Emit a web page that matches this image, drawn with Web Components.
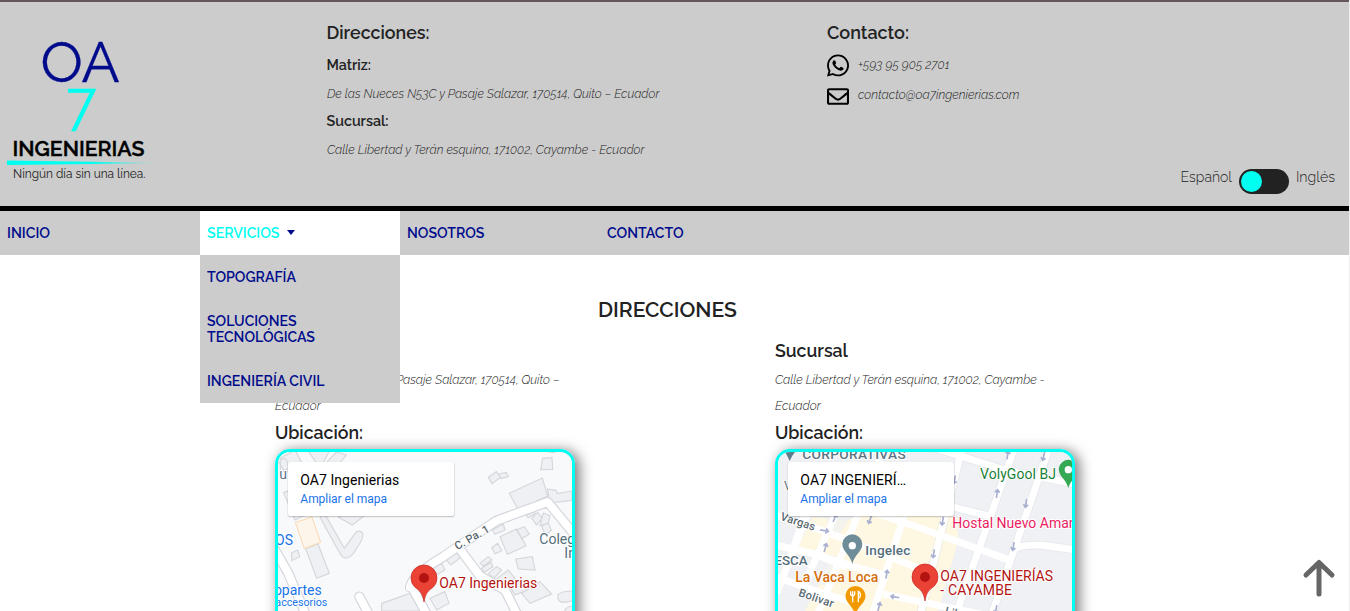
<!DOCTYPE html>
<html lang="es">
<head>
<meta charset="utf-8">
<title>OA7 Ingenierias</title>
<style>
html,body{margin:0;height:611px;overflow:hidden;background:#fff}
body{font-family:Raleway,Lato,sans-serif;color:#222}
</style>
</head>
<body>
<oa-page></oa-page>
<script>
const define = (name, html, setup) => {
  const t = document.createElement('template');
  t.innerHTML = html;
  customElements.define(name, class extends HTMLElement {
    connectedCallback() {
      if (this.shadowRoot) return;
      this.attachShadow({mode: 'open'}).append(t.content.cloneNode(true));
      if (setup) setup(this, this.shadowRoot);
    }
  });
};

// One line of text, scaled so that it takes the width given in w.
define('fit-text', `<style>:host{display:block;white-space:nowrap}span{display:inline-block;white-space:nowrap;vertical-align:top}</style><span><slot></slot></span>`,
  (el, root) => {
    const s = root.querySelector('span'), w = +el.getAttribute('w');
    const size = parseFloat(getComputedStyle(s).fontSize);
    const k = w / s.getBoundingClientRect().width;
    if (k > .9 && k < 1.1) s.style.fontSize = (size * k).toFixed(2) + 'px';
  });

define('oa-logo', `<style>:host{display:block;width:160px;height:150px}svg{display:block}</style>
<svg width="160" height="150" viewBox="0 36 160 150" font-family="Raleway,Lato,sans-serif">
<defs><linearGradient id="g"><stop offset=".55" stop-color="#00fff0"/><stop offset="1" stop-color="#00fff0" stop-opacity="0"/></linearGradient></defs>
<text x="40.500" y="82.400" font-size="57" font-weight="400" fill="#000b8c" stroke="#000b8c" stroke-width=".3" textLength="79" lengthAdjust="spacingAndGlyphs">OA</text>
<text x="66.500" y="130.700" font-size="57.500" font-weight="400" fill="#00fff0" stroke="#00fff0" stroke-width=".3" textLength="29.500" lengthAdjust="spacingAndGlyphs" style="font-feature-settings:'lnum'">7</text>
<text x="12.500" y="156" font-size="20.500" font-weight="600" fill="#000" stroke="#000" stroke-width=".4" textLength="132" lengthAdjust="spacingAndGlyphs">INGENIERIAS</text>
<path d="M7 160.500L158 162.700V163.300L7 165Z" fill="url(#g)"/>
<text x="13" y="178" font-size="12.500" fill="#222" textLength="132.500" lengthAdjust="spacingAndGlyphs">Ningún día sin una línea.</text>
</svg>`);

define('oa-switch', `<style>:host{display:block;box-sizing:border-box;width:50px;height:25px;border-radius:13px;background:#222;padding:2px}
i{display:block;width:21px;height:21px;border-radius:50%;background:#00fff0}</style><i></i>`);

define('oa-header', `<style>
:host{display:block;box-sizing:border-box;height:211px;background:#ccc;border-top:2px solid #66555b;border-bottom:5px solid #000}
.row{display:grid;grid-template-columns:326.500px 500.500px 1fr;height:204px}
.logo{padding-top:34px}.col{padding-top:17px}
.h{font-size:18px;font-weight:650;line-height:28px;margin-bottom:5px}
.b{font-size:14.400px;font-weight:650;line-height:26px}
.i{font-size:12.800px;font-weight:300;font-style:italic;line-height:32px;height:30px;padding-left:.5px}
.c{display:flex;align-items:center;gap:9px;height:30px}
.c svg{width:22px;height:23px;flex:none;margin-top:1px}
.c .i{line-height:30px;margin-top:-1px;padding:0}
.right{display:flex;flex-direction:column}
.lang{display:flex;align-items:center;margin:auto 14px 10px auto;gap:7px;font-size:14.400px;font-weight:300;height:29px}
.lang fit-text{line-height:20px;margin-top:-9px}
</style>
<div class="row"><div class="logo"><oa-logo></oa-logo></div>
<div class="col"><fit-text class="h" w="103">Direcciones:</fit-text>
<fit-text class="b" w="44.5">Matriz:</fit-text><fit-text class="i" w="332.5">De las Nueces N53C y Pasaje Salazar, 170514, Quito – Ecuador</fit-text>
<fit-text class="b" w="62">Sucursal:</fit-text><fit-text class="i" w="317.5">Calle Libertad y Terán esquina, 171002, Cayambe - Ecuador</fit-text></div>
<div class="col right"><fit-text class="h" w="82" style="margin-bottom:3px">Contacto:</fit-text>
<div class="c"><svg viewBox="0 32 448 448"><path d="M380.900 97.100C339 55.100 283.200 32 223.900 32c-122.400 0-222 99.600-222 222 0 39.100 10.200 77.300 29.600 111L0 480l117.700-30.900c32.400 17.700 68.900 27 106.100 27h.1c122.300 0 224.100-99.600 224.100-222 0-59.300-25.200-115-67.100-157zm-157 341.600c-33.200 0-65.700-8.900-94-25.700l-6.700-4-69.800 18.300L72 359.200l-4.400-7c-18.500-29.400-28.200-63.300-28.200-98.200 0-101.700 82.800-184.500 184.600-184.500 49.300 0 95.600 19.200 130.400 54.100 34.800 34.900 56.200 81.200 56.100 130.500 0 101.800-84.900 184.600-186.600 184.600zm101.200-138.200c-5.500-2.800-32.800-16.200-37.900-18-5.100-1.900-8.800-2.800-12.500 2.800-3.700 5.600-14.300 18-17.600 21.800-3.200 3.700-6.500 4.200-12 1.400-32.600-16.300-54-29.100-75.500-66-5.700-9.800 5.700-9.100 16.300-30.300 1.800-3.700.9-6.900-.5-9.700-1.400-2.800-12.500-30.100-17.100-41.200-4.500-10.800-9.100-9.300-12.500-9.500-3.200-.2-6.900-.2-10.600-.2-3.700 0-9.700 1.400-14.800 6.900-5.100 5.600-19.400 19-19.400 46.300 0 27.300 19.900 53.700 22.600 57.400 2.800 3.700 39.100 59.700 94.800 83.800 35.200 15.200 49 16.500 66.600 13.900 10.700-1.600 32.800-13.400 37.400-26.400 4.600-13 4.600-24.100 3.200-26.400-1.300-2.500-5-3.900-10.500-6.600z"/></svg><fit-text class="i" w="91.5">+593 95 905 2701</fit-text></div>
<div class="c"><svg viewBox="0 0 512 512" style="margin-top:3px"><path d="M464 64H48C21.500 64 0 85.500 0 112v288c0 26.500 21.500 48 48 48h416c26.500 0 48-21.500 48-48V112c0-26.500-21.500-48-48-48zm0 48v40.800c-22.400 18.300-58.200 46.700-134.600 106.500-16.800 13.200-50.200 45.100-73.400 44.700-23.200.4-56.600-31.500-73.400-44.700C106.200 199.500 70.400 171.100 48 152.800V112h416zM48 400V214.400c22.900 18.200 55.400 43.900 104.900 82.600 21.900 17.200 60.100 55.200 103.100 55 42.700.2 80.500-37.200 103.100-54.900 49.500-38.800 82-64.400 104.900-82.700V400H48z"/></svg><fit-text class="i" w="161.5">contacto@oa7ingenierias.com</fit-text></div>
<div class="lang"><fit-text w="51.5">Español</fit-text><oa-switch></oa-switch><fit-text w="39">Inglés</fit-text></div></div></div>`);

define('oa-nav', `<style>
:host{display:flex;height:44px;background:#ccc;color:#000b8c;font-size:14.400px;font-weight:600;line-height:16px;position:relative;z-index:2}
.it{box-sizing:border-box;width:200px;padding:14px 7px}
.open{background:#fff;position:relative}.top{display:flex;align-items:center;gap:7px}.top fit-text{color:#00fff0}
.top i{border:4.500px solid transparent;border-top:5px solid #000b8c;border-bottom:0;margin-top:-1px}
.menu{position:absolute;left:0;top:44px;width:200px;background:#ccc}
</style><div class="it"><fit-text w="43">INICIO</fit-text></div>
<div class="it open"><div class="top"><fit-text w="72.5">SERVICIOS</fit-text><i></i></div>
<div class="menu"><div class="it"><fit-text w="89">TOPOGRAFÍA</fit-text></div><div class="it"><fit-text w="89.5">SOLUCIONES</fit-text><fit-text w="108">TECNOLÓGICAS</fit-text></div><div class="it"><fit-text w="117.5">INGENIERÍA CIVIL</fit-text></div></div></div>
<div class="it"><fit-text w="77.5">NOSOTROS</fit-text></div><div class="it"><fit-text w="76.5">CONTACTO</fit-text></div>`);

const frame = `:host{display:block;box-sizing:border-box;width:300px;height:300px;border:3px solid #00fff0;border-radius:15px;overflow:hidden;box-shadow:4px 2px 14px rgba(0,0,0,.55)}
svg{display:block}svg text{font-family:Roboto,sans-serif;font-size:42px}
.halo{paint-order:stroke;stroke:#fff;stroke-width:6px;stroke-linejoin:round}.m{font-weight:500}`;
const card = (t, w) => `<rect x="69" y="68" width="499" height="163" rx="6" fill="#000" opacity=".13"/><rect x="66" y="65" width="504" height="168" rx="8" fill="#000" opacity=".06"/><rect x="69" y="66" width="498" height="162" rx="6" fill="#fff"/>
<text x="106" y="135" fill="#000" textLength="${w}">${t}</text><text x="106" y="189" fill="#1a73e8" textLength="260" style="font-size:36px">Ampliar el mapa</text>`;
const pin = (x, y) => `<path transform="translate(${x} ${y})" d="M0 0C-4 -26 -13 -34 -27 -44A39 39 0 1 1 27 -44C13 -34 4 -26 0 0Z" fill="#ea4335" stroke="#c5221f" stroke-width="2"/><circle cx="${x}" cy="${y-72}" r="15" fill="#b31412"/>`;

define('map-matriz', `<style>${frame}.b path{fill:#eff0f3;stroke:#d5d7db;stroke-width:3.500}.r path{fill:none;stroke-linejoin:round;stroke-linecap:round}.o path{stroke:#d3d6dc;stroke-width:31}.n path{stroke:#fff;stroke-width:24}</style>
<svg width="294" height="294" viewBox="39 36 882 882"><rect x="39" y="36" width="882" height="882" fill="#f8f9fb"/>
<g class="b">
<path d="M90 30L125 95H60L36 60ZM128 30L165 85L195 30ZM215 36L244 45L205 92L180 72ZM46 60Q68 45 70 85L46 100ZM56 158L90 145L140 215L90 240Z"/>
<path d="M670 112L694 95L707 112L681 131ZM702 102L724 97L730 110L708 116ZM833 55L861 52L863 88L827 89ZM850 36L868 34V38Z"/>
<path d="M733 160L832 114L848 168L768 205L758 206ZM848 147L873 151L877 161L921 153V181L862 188L852 178Z"/>
<path d="M220 232L245 218H310L262 255ZM122 326L159 312L193 400L155 415ZM80 338L98 330L104 350L80 362Z"/>
<path d="M165 232Q178 215 190 240L238 325L270 280Q282 267 293 280Q300 290 265 340Q240 370 222 335Z"/>
<path d="M705 290L755 267L783 317L727 343ZM680 323L698 310L710 332L690 341ZM755 270L778 260L793 282L770 296ZM682 270L715 252L720 270L690 283ZM784 225L808 214L810 222L789 233ZM800 235L818 217L832 235L815 255ZM835 219L855 227L850 250L825 257ZM830 257L850 248L859 270L841 286Z"/>
<path d="M544 360L573 336L586 353L558 375ZM752 357L802 350L810 390L760 387ZM645 370L669 350L681 360L655 378ZM650 385L678 367L684 380L657 397ZM670 400L695 380L710 390L686 415ZM690 420L730 390L750 415L710 440ZM735 440L775 420L787 450L750 465ZM770 460L825 425L860 462L795 490Z"/>
<path d="M350 490L440 458L474 513H350ZM495 475L540 455L552 490L515 510ZM495 390L530 370L540 390L510 407ZM880 463Q900 450 935 454V478Q900 490 885 485Q875 475 880 463ZM900 510Q910 495 935 500V530H900Z"/>
</g>
<path d="M91 247L141 231L167 307L118 326Z" fill="#fef5ea" stroke="#fad9b0" stroke-width="3"/>
<g class="r o"><path d="M435 442Q440 405 535 350L605 302L695 242L848 186L932 288M590 335L645 408L720 450L760 530M440 440L495 540M30 330L70 400L125 530M283 470L310 520"/></g>
<g class="r n"><path d="M435 442Q440 405 535 350L605 302L695 242L848 186L932 288M590 335L645 408L720 450L760 530M440 440L495 540M30 330L70 400L125 530M283 470L310 520"/></g>
<text class="halo" x="43" y="117" fill="#5b7484">u</text>
<text class="halo m" transform="translate(577 331) rotate(-30)" fill="#5a6a72" textLength="114" style="font-size:34px">C. Pa. 1</text>
<text class="halo" x="823" y="312" fill="#546e7a">Coleg</text><text class="halo" x="898" y="354" fill="#546e7a">In</text>
<text class="halo" x="84" y="315" text-anchor="end" fill="#1a73e8">OS</text><text class="halo" x="170" y="465" text-anchor="end" fill="#1a73e8">opartes</text><text class="halo" x="187" y="497" text-anchor="end" fill="#1a73e8" style="font-size:32px">accesorios</text>
${pin(477, 486)}<text class="halo" x="523" y="444" fill="#b31412" textLength="294">OA7 Ingenierias</text>
${card('OA7 Ingenierias', 297)}</svg>`);

const arrow = (x, y, a) => `<path transform="translate(${x} ${y}) rotate(${a})" d="M0 13V-11M-7 -4L0 -12L7 -4"/>`;
define('map-sucursal', `<style>${frame}.r path{fill:none;stroke:#fff;stroke-width:21;stroke-linejoin:round}.r .e{stroke:#dfe2e8;stroke-width:26}.a path{fill:none;stroke:#a9afd0;stroke-width:5}</style>
<svg width="294" height="294" viewBox="39 36 882 882"><rect x="39" y="36" width="882" height="882" fill="#f0f1f4"/>
<path d="M142 232L250 240L305 215L575 230L580 300L520 513H120L200 360L95 330Z" fill="#fef7e2"/>
<path d="M190 228L250 240L220 290L180 275ZM110 330L225 350L190 440L70 405ZM360 110L420 36H500L470 200Z" fill="#f0f1f4" opacity=".65"/>
<g class="r"><path class="e" d="M590 30L465 530M746 30L560 560M850 30L668 560M480 15L720 90L935 133M520 190L680 230M742 333Q760 312 830 316L935 330" opacity=".6"/>
<path d="M345 60L155 530M426 200L310 560M590 30L465 530M746 30L560 560M850 30L668 560"/>
<path d="M135 180L70 370M130 215L35 460M215 215L120 430"/>
<path d="M480 15L720 90L935 133M300 210L440 255L738 362M30 225L190 278L450 380L570 430M520 190L680 230M30 315L150 342L245 382M150 342L265 380L360 405M30 410L190 465L290 495M355 462L490 490L660 525"/>
<path d="M742 333Q760 312 830 316L935 330"/></g>
<g class="a">${arrow(728,45,10)}${arrow(836,49,195)}${arrow(696,161,8)}${arrow(783,190,188)}${arrow(569,119,190)}${arrow(533,243,190)}${arrow(506,341,190)}${arrow(745,319,190)}${arrow(315,239,200)}${arrow(209,234,20)}${arrow(178,272,100)}${arrow(181,323,15)}${arrow(365,403,10)}${arrow(390,471,280)}${arrow(342,500,15)}${arrow(693,508,190)}</g>
<path d="M60 36Q68 48 74 63Q80 48 90 36Z" fill="#607d8b"/>
<text class="halo m" x="112" y="57" fill="#5b7484" textLength="310" style="font-size:41px">CORPORATIVAS</text>
<text class="halo" x="57" y="150" fill="#5a6a72" style="font-size:36px">V</text>
<text class="halo" x="645" y="117" fill="#188038" textLength="228">VolyGool BJ</text>
<path d="M910 144C905 125 895 118 886 104A29 29 0 1 1 935 104C926 118 915 125 910 144Z" fill="#34a853"/><circle cx="910" cy="89" r="11" fill="#fff"/>
<text class="halo" x="562" y="264" fill="#e91e63">Hostal Nuevo Amanecer</text>
<text class="halo m" transform="translate(44 239) rotate(18)" fill="#5a6a72" textLength="108" style="font-size:34px">Vargas</text>
<path d="M262 373C258 352 246 344 238 331A30 30 0 1 1 286 331C278 344 266 352 262 373Z" fill="#6f8c99"/><circle cx="262" cy="317" r="11" fill="#fff"/>
<text class="halo m" x="301" y="345" fill="#546e7a" textLength="135" style="font-size:41px">Ingelec</text>
<text class="halo m" x="128" y="375" text-anchor="end" fill="#546e7a" style="font-size:40px">ESCA</text>
<text class="halo m" x="91" y="426" fill="#d56e0c" textLength="249">La Vaca Loca</text>
<text class="halo m" transform="translate(98 467) rotate(19)" fill="#5a6a72" textLength="110" style="font-size:34px">Bolivar</text>
<path d="M271 528C267 505 256 499 247 485A30 30 0 1 1 296 485C287 499 275 505 271 528Z" fill="#f29900"/>
<path d="M257 454V464Q263 472 269 464V454M263 454V487M280 487V454Q290 460 284 473H280" fill="none" stroke="#fff" stroke-width="4"/>
<text class="halo m" transform="translate(538 523) rotate(15)" fill="#5a6a72" style="font-size:34px">Libertad</text>
${pin(480, 483)}<text class="halo" x="526" y="424" fill="#b31412" textLength="338">OA7 INGENIERÍAS</text><text class="halo" x="526" y="465" fill="#b31412" textLength="215">- CAYAMBE</text>
${card('OA7 INGENIERÍ…', 317)}</svg>`);

define('oa-place', `<style>:host{display:block;width:300px}
::slotted(.t){font-size:18px;font-weight:650;line-height:26px}::slotted(.t2){margin-top:1px;margin-bottom:3px}
::slotted(.i){font-size:12.800px;font-weight:300;font-style:italic;line-height:26px}::slotted(.f){margin-top:3px}</style><slot></slot>`);

define('oa-page', `<style>:host{display:block;height:611px;width:1349px;border-right:1px solid #eee;overflow:hidden;position:relative}
main{padding-top:40px}.h{font-size:20.500px;font-weight:650;line-height:30px;width:139px;margin:0 0 13px 598px}
.cols{display:flex;gap:200px;padding-left:275px}
.up{position:absolute;right:12px;bottom:12px;width:36px;height:42px}</style>
<oa-header></oa-header><oa-nav></oa-nav>
<main><fit-text class="h" w="139">DIRECCIONES</fit-text><div class="cols">
<oa-place><fit-text class="t" w="53">Matriz</fit-text><fit-text class="i f" w="284.5">De las Nueces N53C y Pasaje Salazar, 170514, Quito –</fit-text><fit-text class="i" w="46">Ecuador</fit-text><fit-text class="t t2" w="88">Ubicación:</fit-text><map-matriz></map-matriz></oa-place>
<oa-place><fit-text class="t" w="73">Sucursal</fit-text><fit-text class="i f" w="270">Calle Libertad y Terán esquina, 171002, Cayambe -</fit-text><fit-text class="i" w="46">Ecuador</fit-text><fit-text class="t t2" w="88">Ubicación:</fit-text><map-sucursal></map-sucursal></oa-place>
</div></main>
<svg class="up" viewBox="1301 557 36 42"><path d="M1319 594V563M1306 575L1319 562.500L1332 575" fill="none" stroke="#666" stroke-width="5" stroke-linecap="round" stroke-linejoin="round"/></svg>`);
</script>
</body>
</html>
